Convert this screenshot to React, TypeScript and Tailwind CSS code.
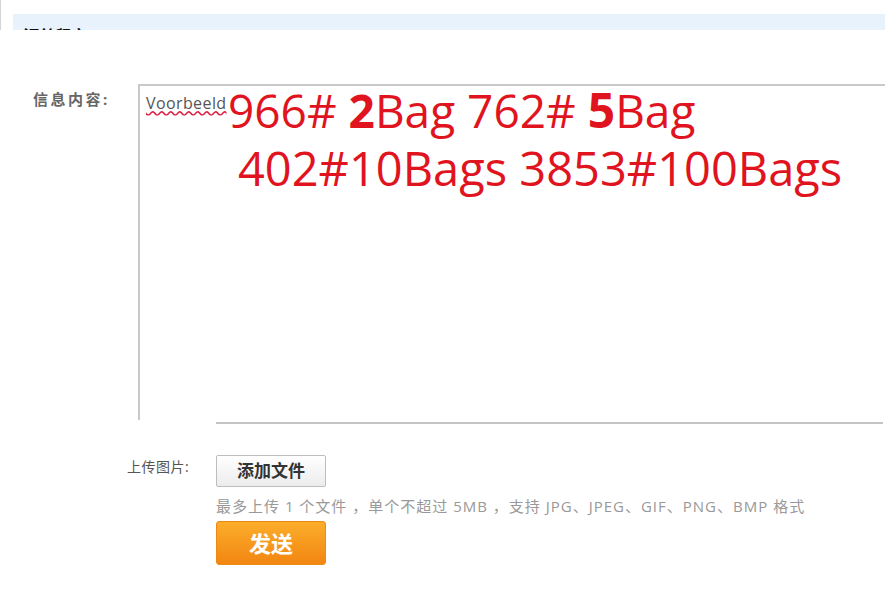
export default function App() {
  return (
    <div className="w-[885px] h-[596px] bg-white overflow-hidden font-['Open_Sans','Noto_Sans_CJK_SC',sans-serif]">
      {/* cropped header band */}
      <div className="h-[30px] pt-[14px] pl-[12px] border-l border-[#d4d4d4]">
        <div className="h-[16px] overflow-hidden bg-gradient-to-b from-[#e6f1fb] to-[#eaf3fd] pl-[10px] pt-[10px]">
          <span className="text-[16px] font-bold text-[#111] leading-none">订单留言</span>
        </div>
      </div>

      {/* message content */}
      <div className="flex mt-[54px]">
        <div className="w-[138px] pl-[33px] pt-[5px] text-[15px] tracking-[2.5px] text-[#666] font-bold leading-[20px]">信息内容:</div>
        <div className="flex-1 h-[336px] border-l-2 border-t-2 border-[#c9c9c9] pl-[6px] pt-[8px] text-[#e0141e]">
          <div className="flex items-start">
            <span className="w-[82px] text-[16px] tracking-[0.4px] leading-[18px] text-[#555] underline decoration-wavy decoration-[#d24]">Voorbeeld</span>
            <span className="text-[46px] leading-[44px] -mt-[6px] whitespace-nowrap">
              966# <b className="font-bold">2</b>Bag 762# <b className="font-bold text-[48px]">5</b>Bag
            </span>
          </div>
          <div className="pl-[92px] mt-[14px] text-[47px] leading-[44px] whitespace-nowrap">402#10Bags 3853#100Bags</div>
        </div>
      </div>
      <div className="ml-[216px] mt-[2px] h-[2px] w-[667px] bg-[#c4c4c4]" />

      {/* upload */}
      <div className="flex mt-[31px]">
        <div className="w-[216px] pl-[127px] pt-[2px] text-[14px] tracking-[0.5px] text-[#555] leading-[20px]">上传图片:</div>
        <div>
          <button className="w-[110px] h-[32px] border border-[#bdbdbd] bg-gradient-to-b from-white to-[#ececec] text-[17px] font-bold text-[#333] rounded-[2px]">
            添加文件
          </button>
          <div className="mt-[9px] text-[15px] leading-[20px] text-[#999] whitespace-nowrap tracking-[1px]">
            最多上传 1 个文件 ，单个不超过 5MB ，支持 JPG、JPEG、GIF、PNG、BMP 格式
          </div>
          <button className="mt-[5px] w-[110px] h-[44px] rounded-[3px] bg-gradient-to-b from-[#fbad2a] to-[#f28610] border border-[#ec8a17] text-white text-[22px] font-bold">
            发送
          </button>
        </div>
      </div>
    </div>
  );
}
